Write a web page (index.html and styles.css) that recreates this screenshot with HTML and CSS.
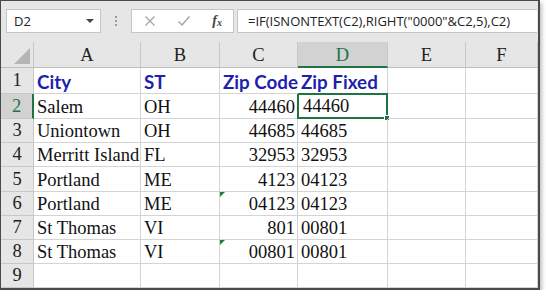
FILE: index.html
```html
<!DOCTYPE html>
<html lang="en">
  <head>
    <meta charset="UTF-8" />
    <meta name="viewport" content="width=device-width, initial-scale=1.0" />
    <title>Zip Fixed</title>
    <link rel="stylesheet" href="styles.css">
  </head>
  <body>
    <div class="window">
      <!-- Name box and formula bar -->
      <div class="toolbar">
        <div class="name-box">
          <span>D2</span>
          <span class="caret"></span>
        </div>
        <div class="grip"><i></i><i></i><i></i></div>
        <div class="fx-buttons">
          <svg class="btn-icon" width="12" height="12" viewBox="0 0 12 12">
            <path d="M1.5 1.5 L10.5 10.5 M10.5 1.5 L1.5 10.5" stroke="#a6a6a6" stroke-width="1.4" fill="none" />
          </svg>
          <svg class="btn-icon" width="14" height="12" viewBox="0 0 14 12">
            <path d="M1.5 6.5 L5 10 L12.5 1.5" stroke="#a6a6a6" stroke-width="1.5" fill="none" />
          </svg>
          <span class="fx">f<sub>x</sub></span>
        </div>
        <div class="formula">=IF(ISNONTEXT(C2),RIGHT("0000"&amp;C2,5),C2)</div>
      </div>

      <!-- Worksheet grid -->
      <div class="sheet">
        <div class="corner"><span class="tri"></span></div>
        <div class="col-head">A</div>
        <div class="col-head">B</div>
        <div class="col-head">C</div>
        <div class="col-head active">D</div>
        <div class="col-head">E</div>
        <div class="col-head">F</div>

        <div class="row-head">1</div>
        <div class="cell title">City</div>
        <div class="cell title">ST</div>
        <div class="cell title overflow">Zip Code</div>
        <div class="cell title">Zip Fixed</div>
        <div class="cell"></div>
        <div class="cell"></div>

        <div class="row-head active">2</div>
        <div class="cell">Salem</div>
        <div class="cell">OH</div>
        <div class="cell num">44460</div>
        <div class="cell selected">44460<span class="handle"></span></div>
        <div class="cell"></div>
        <div class="cell"></div>

        <div class="row-head">3</div>
        <div class="cell">Uniontown</div>
        <div class="cell">OH</div>
        <div class="cell num">44685</div>
        <div class="cell">44685</div>
        <div class="cell"></div>
        <div class="cell"></div>

        <div class="row-head">4</div>
        <div class="cell">Merritt Island</div>
        <div class="cell">FL</div>
        <div class="cell num">32953</div>
        <div class="cell">32953</div>
        <div class="cell"></div>
        <div class="cell"></div>

        <div class="row-head">5</div>
        <div class="cell">Portland</div>
        <div class="cell">ME</div>
        <div class="cell num">4123</div>
        <div class="cell">04123</div>
        <div class="cell"></div>
        <div class="cell"></div>

        <div class="row-head">6</div>
        <div class="cell">Portland</div>
        <div class="cell">ME</div>
        <div class="cell num flag">04123</div>
        <div class="cell">04123</div>
        <div class="cell"></div>
        <div class="cell"></div>

        <div class="row-head">7</div>
        <div class="cell">St Thomas</div>
        <div class="cell">VI</div>
        <div class="cell num">801</div>
        <div class="cell">00801</div>
        <div class="cell"></div>
        <div class="cell"></div>

        <div class="row-head">8</div>
        <div class="cell">St Thomas</div>
        <div class="cell">VI</div>
        <div class="cell num flag">00801</div>
        <div class="cell">00801</div>
        <div class="cell"></div>
        <div class="cell"></div>

        <div class="row-head">9</div>
        <div class="cell"></div>
        <div class="cell"></div>
        <div class="cell"></div>
        <div class="cell"></div>
        <div class="cell"></div>
        <div class="cell"></div>
      </div>
    </div>
  </body>
</html>
```

FILE: styles.css
```css
* {
  box-sizing: border-box;
}
body {
  margin: 0;
  background: #fff;
}
.window {
  width: 540px;
  border: 2px solid #4a4a4a;
  border-top-width: 1px;
  border-left-width: 1px;
  background: #fff;
  box-shadow: 2px 3px 4px rgba(0, 0, 0, 0.25);
}

/* toolbar */
.toolbar {
  height: 41px;
  background: #e6e6e6;
  display: flex;
  align-items: center;
  padding: 0 0 2px 5px;
  font-family: "Open Sans", "Noto Sans", sans-serif;
  font-size: 13px;
  color: #222;
}
.name-box {
  width: 95px;
  height: 24px;
  background: #fff;
  border: 1px solid #c6c6c6;
  display: flex;
  align-items: center;
  justify-content: space-between;
  padding: 0 6px 0 7px;
}
.caret {
  width: 0;
  height: 0;
  border-left: 4px solid transparent;
  border-right: 4px solid transparent;
  border-top: 4px solid #444;
}
.grip {
  width: 30px;
  display: flex;
  flex-direction: column;
  align-items: center;
  gap: 2px;
}
.grip i {
  width: 2px;
  height: 2px;
  background: #9a9a9a;
}
.fx-buttons {
  width: 103px;
  height: 24px;
  background: #fff;
  border: 1px solid #c6c6c6;
  display: flex;
  align-items: center;
  justify-content: space-between;
  padding: 0 11px 0 12px;
}
.fx {
  font-family: "Liberation Serif", serif;
  font-style: italic;
  font-weight: bold;
  font-size: 14px;
  color: #444;
}
.fx sub {
  font-size: 10px;
  vertical-align: -1px;
}
.formula {
  flex: 1;
  height: 24px;
  margin-left: 3px;
  margin-right: 1px;
  background: #fff;
  border: 1px solid #c6c6c6;
  border-right: none;
  padding-left: 10px;
  line-height: 22px;
  white-space: nowrap;
}

/* grid */
.sheet {
  display: grid;
  grid-template-columns: 33px 107px 79px 78px 90px 78px 1fr;
  grid-template-rows: 26px 26px 25px 24px 24px 25px 24px 24px 24px 24px;
  font-family: "Liberation Serif", serif;
  font-size: 18.5px;
  color: #111;
}
.corner {
  position: relative;
  background: #e6e6e6;
  border-right: 1px solid #c8c8c8;
  border-bottom: 1px solid #bdbdbd;
}
.tri {
  position: absolute;
  right: 3px;
  bottom: 3px;
  width: 0;
  height: 0;
  border-left: 16px solid transparent;
  border-bottom: 16px solid #b5b5b5;
}
.col-head,
.row-head {
  background: #e6e6e6;
  display: flex;
  align-items: center;
  justify-content: center;
  color: #222;
  border-right: 1px solid #c8c8c8;
  border-bottom: 1px solid #c8c8c8;
}
.col-head {
  border-bottom-color: #bdbdbd;
  padding-top: 2px;
}
.col-head.active {
  background: #d2d2d2;
  color: #217346;
  border-bottom: 2px solid #217346;
}
.row-head.active {
  background: #d2d2d2;
  color: #217346;
  border-right: 2px solid #217346;
}
.cell {
  position: relative;
  display: flex;
  align-items: flex-end;
  padding: 0 2px 0 3px;
  line-height: 22px;
  white-space: nowrap;
  border-right: 1px solid #d4d4d4;
  border-bottom: 1px solid #d4d4d4;
}
.cell.num {
  justify-content: flex-end;
}
.cell.title {
  font-family: "Lato", "Open Sans", sans-serif;
  font-weight: bold;
  font-size: 18.8px;
  color: #1f1fae;
  align-items: center;
  padding-top: 2px;
}
.cell.overflow {
  overflow: visible;
  z-index: 1;
  border-right: none;
}
.cell.flag::before {
  content: "";
  position: absolute;
  left: 0;
  top: 0;
  border-top: 5px solid #1e7b3a;
  border-right: 5px solid transparent;
}
.cell.selected {
  border: 2px solid #217346;
  margin: -1px 0 0 -1px;
  padding-left: 4px;
}
.handle {
  position: absolute;
  right: -4px;
  bottom: -4px;
  width: 6px;
  height: 6px;
  background: #217346;
  border: 1px solid #fff;
}
```
